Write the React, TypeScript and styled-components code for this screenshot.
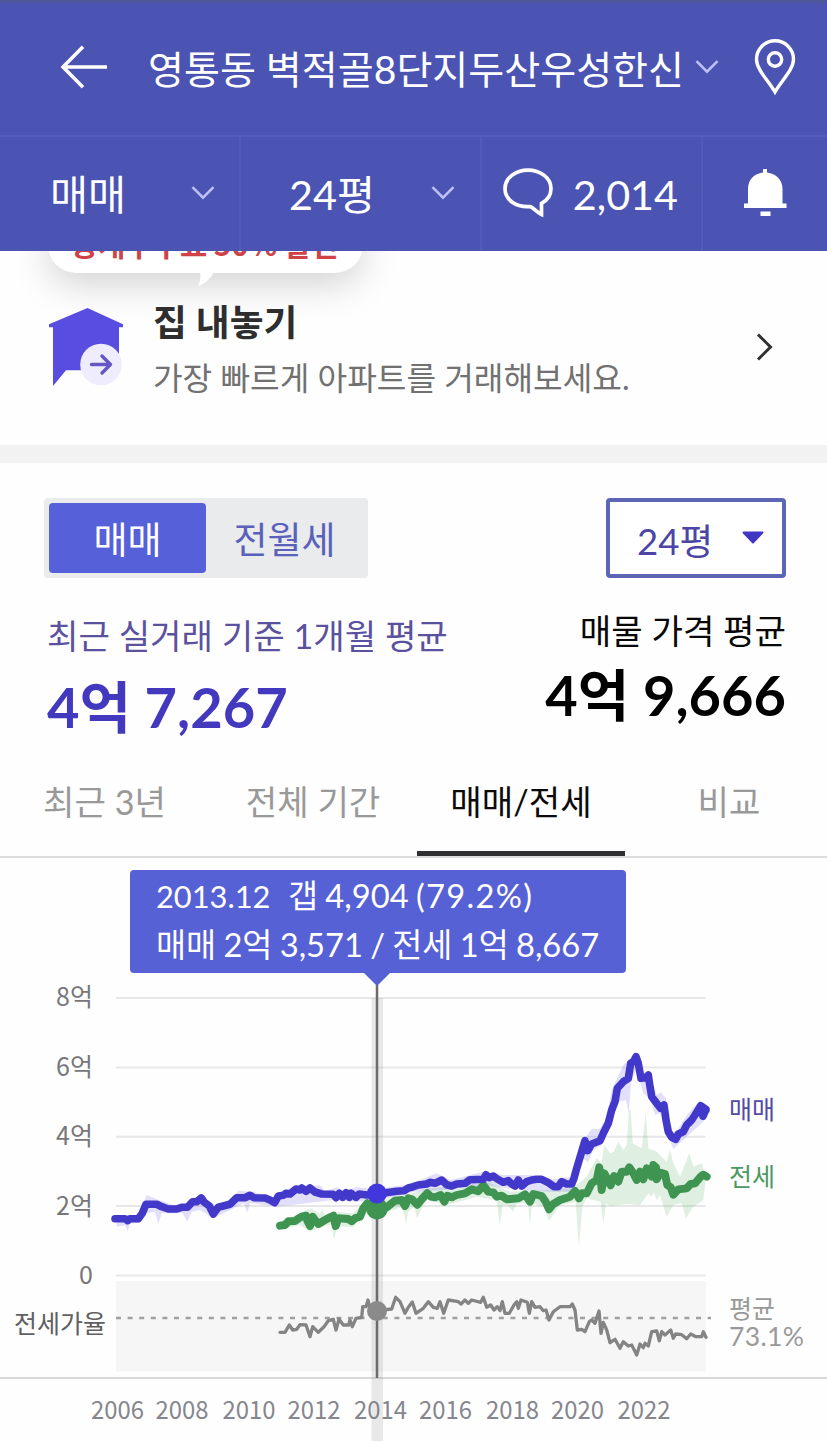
import React from "react";
import styled, { createGlobalStyle } from "styled-components";

const GlobalStyle = createGlobalStyle`
  * { box-sizing: border-box; }
  body {
    margin: 0;
    background: #fefefe;
    font-family: Lato, "Noto Sans CJK KR", sans-serif;
    -webkit-font-smoothing: antialiased;
  }
  button { font: inherit; border: 0; background: none; padding: 0; color: inherit; }
`;

const Page = styled.div`
  width: 827px;
  height: 1441px;
  overflow: hidden;
  display: flex;
  flex-direction: column;
`;

/* ---------- header ---------- */

const Header = styled.header`
  flex: none;
  height: 251px;
  background: #4b54b2;
  border-top: 3px solid #4e5798;
  color: #fff;
`;

const TitleBar = styled.div`
  height: 132px;
  display: flex;
  align-items: center;
  padding: 0 31px 4px 60px;
`;

const Title = styled.h1`
  margin: 3px 0 0 40px;
  font-size: 39.1px;
  font-weight: 400;
  line-height: 56px;
  white-space: nowrap;
  width: 547px;
`;

const PinSlot = styled.span`
  display: flex;
  margin-left: auto;
`;

const FilterBar = styled.nav`
  height: 116px;
  display: grid;
  grid-template-columns: 239px 241px 221px 126px;
  border-top: 2px solid #545dba;
`;

const FilterCell = styled.button<{ $left: number; $right: number }>`
  display: flex;
  align-items: center;
  justify-content: space-between;
  padding: 0 ${(p) => p.$right}px 0 ${(p) => p.$left}px;
  font-size: 41.3px;
  line-height: 56px;
  white-space: nowrap;
  & > svg { margin-top: -3px; }
  & + & { border-left: 2px solid #535bb8; }
`;

/* ---------- sell banner ---------- */

const SellSection = styled.section`
  position: relative;
  flex: none;
  height: 194px;
  overflow: hidden;
  display: flex;
  align-items: flex-start;
  padding: 47px 54px 0 49px;
`;

const PromoBubble = styled.div`
  position: absolute;
  left: 48px;
  top: -40px;
  width: 315px;
  height: 62px;
  border-radius: 28px;
  background: #fff;
  box-shadow: 0 12px 36px rgba(0, 0, 0, 0.17);
  color: #cf4348;
  font-size: 29.6px;
  font-weight: 700;
  line-height: 40px;
  padding: 13px 0 0 23px;
  white-space: nowrap;
  font-family: "Noto Sans CJK KR", sans-serif;
`;

const BubbleTail = styled.svg`
  position: absolute;
  left: 148px;
  top: 61px;
`;

const HouseSlot = styled.span`
  position: relative;
  display: flex;
  margin-top: 9px;
`;

const SellText = styled.div`
  position: relative;
  margin-left: 30px;
  flex: 1;
`;

const SellTitle = styled.h2`
  margin: 0;
  font-size: 36.8px;
  font-weight: 700;
  line-height: 48px;
  color: #2e2e2e;
`;

const SellDescription = styled.p`
  margin: 8px 0 0;
  font-size: 32.2px;
  line-height: 48px;
  color: #717171;
  white-space: nowrap;
`;

const ChevronSlot = styled.span`
  display: flex;
  margin-top: 34px;
`;

const Divider = styled.div`
  flex: none;
  height: 18px;
  background: #f2f2f2;
`;

/* ---------- price summary ---------- */

const Controls = styled.div`
  flex: none;
  display: flex;
  justify-content: space-between;
  padding: 35px 41px 0 44px;
`;

const Segmented = styled.div`
  display: flex;
  width: 324px;
  height: 80px;
  padding: 5px;
  border-radius: 4px;
  background: #e9ebed;
`;

const Segment = styled.button<{ $active?: boolean }>`
  width: 157px;
  border-radius: 4px;
  font-size: 37px;
  line-height: 56px;
  padding-top: 3px;
  color: ${(p) => (p.$active ? "#fff" : "#5a61ba")};
  background: ${(p) => (p.$active ? "#5660d8" : "transparent")};
`;

const SizeSelect = styled.button`
  display: flex;
  align-items: center;
  justify-content: space-between;
  width: 180px;
  height: 80px;
  padding: 6px 18px 0 27px;
  border: 4px solid #5c66b4;
  border-radius: 4px;
  background: #fff;
  color: #4c44a6;
  font-size: 36.6px;
  line-height: 56px;
`;

const CaretSlot = styled.span`
  display: flex;
  margin-top: -8px;
`;

const Prices = styled.div`
  flex: none;
  display: flex;
  justify-content: space-between;
  padding: 28px 41px 0 47px;
  height: 197px;
`;

const Price = styled.div<{ $tone: "recent" | "listing" }>`
  display: flex;
  flex-direction: column;
  padding-top: ${(p) => (p.$tone === "recent" ? 5 : 0)}px;
  align-items: ${(p) => (p.$tone === "recent" ? "flex-start" : "flex-end")};
  gap: ${(p) => (p.$tone === "recent" ? 10 : 3)}px;
  white-space: nowrap;
  span {
    font-size: 34.2px;
    line-height: 50px;
    color: ${(p) => (p.$tone === "recent" ? "#5a519f" : "#080808")};
  }
  strong {
    font-size: 56px;
    font-weight: 700;
    line-height: 72px;
    color: ${(p) => (p.$tone === "recent" ? "#4339bf" : "#000")};
  }
`;

/* ---------- tabs ---------- */

const Tabs = styled.div`
  flex: none;
  display: grid;
  grid-template-columns: 209px 208px 208px 202px;
  height: 83px;
  border-bottom: 2px solid #dcdcdc;
`;

const Tab = styled.button<{ $active?: boolean; $pad?: number }>`
  font-size: 34.2px;
  line-height: 54px;
  padding-bottom: 22px;
  padding-left: ${(p) => p.$pad ?? 0}px;
  white-space: nowrap;
  color: ${(p) => (p.$active ? "#0b0b0b" : "#999")};
  border-bottom: 5px solid ${(p) => (p.$active ? "#303033" : "transparent")};
`;

/* ---------- chart ---------- */

const ChartArea = styled.section`
  position: relative;
  flex: none;
  height: 583px;
`;

const ChartSvg = styled.svg`
  display: block;
  font-family: "Noto Sans CJK KR", sans-serif;
`;

const Tooltip = styled.div`
  position: absolute;
  left: 130px;
  top: 12px;
  width: 496px;
  height: 103px;
  padding: 2px 0 0 26px;
  border-radius: 4px;
  background: #5761d6;
  color: #fff;
  font-size: 32.7px;
  line-height: 48px;
  white-space: nowrap;
  word-spacing: -1.1px;
  &::after {
    content: "";
    position: absolute;
    left: 233px;
    top: 102px;
    border: 14px solid transparent;
    border-top-color: #5761d6;
    border-bottom: 0;
  }
`;

const TooltipDate = styled.span`
  display: inline-block;
  width: 132px;
  font-size: 30.8px;
`;

const TooltipShare = styled.span`
  letter-spacing: 1.3px;
`;

/* Series samples: x runs on from one block to the next, both axes in thirds of a pixel. */
type Sample = [number, number];

const place = (samples: Sample[], dx: number, dy: number): Sample[] =>
  samples.map(([x, y]) => [dx + x / 3, dy + y / 3]);

const toPoints = (samples: Sample[]) =>
  samples.map(([x, y]) => `${x.toFixed(1)},${y.toFixed(1)}`).join(" ");

const sale = toPoints([
  ...place([[345,206],[375,206],[383,212],[390,206],[415,206],[427,190],[438,163],[470,163],[485,170],[505,177],[530,177],[545,172],[562,172],[578,155],[590,155],[604,144],[612,156],[628,168],[640,192],[655,172],[690,163],[710,143],[735,143],[750,136],[762,143],[795,144],[810,150],[824,158],[835,138],[850,136],[857,130],[870,132],[888,117],[900,120],[905,114],[918,124],[930,114],[945,126],[965,132],[1000,133],[1008,143],[1018,130],[1028,142],[1038,128],[1048,142],[1054,130],[1068,142],[1078,132],[1100,135],[1130,132],[1190,124],[1212,122],[1225,114]], 0, 1150),
  ...place([[10,470],[25,465],[50,462],[60,457],[75,460],[95,450],[110,464],[125,468],[140,462],[165,460],[180,449],[220,448],[228,434],[238,443],[250,438],[262,447],[280,457],[295,452],[305,462],[315,468],[325,450],[335,468],[350,455],[365,450],[380,448],[395,448],[415,458],[432,470],[445,470],[455,455],[470,462],[485,462],[492,445],[500,415],[515,365],[525,332],[533,362],[545,342],[570,332],[580,310],[595,280],[605,240],[615,215],[622,175],[640,155],[655,145],[662,100],[670,95],[678,80],[685,100],[693,145],[708,143],[715,135],[720,170],[725,200],[740,220],[752,235],[762,225],[768,270],[775,305],[785,322],[797,328],[805,312],[820,305],[830,285],[845,270],[855,255],[872,227],[888,238],[879,259],[876,240],[888,240]], 410, 1030),
]);

const lease = toPoints([
  ...place([[840,227],[855,225],[865,214],[885,213],[895,206],[905,200],[918,197],[922,212],[930,228],[938,200],[948,214],[955,222],[975,210],[990,202],[1000,197],[1007,228],[1015,205],[1045,207],[1055,214],[1065,205],[1080,200],[1090,175],[1102,160],[1115,172],[1130,172],[1160,172],[1185,152],[1205,150],[1215,168],[1225,145]], 0, 1150),
  ...place([[6,508],[22,524],[35,508],[52,490],[63,500],[75,502],[92,495],[103,515],[112,497],[125,502],[140,495],[165,490],[185,478],[205,484],[220,466],[235,485],[250,487],[260,500],[275,497],[290,508],[325,505],[345,493],[360,515],[370,492],[395,498],[407,515],[417,538],[430,522],[450,510],[480,500],[495,483],[507,505],[515,490],[530,490],[545,460],[560,450],[568,412],[575,480],[583,430],[602,466],[612,438],[625,455],[635,425],[650,425],[658,412],[670,430],[680,450],[690,425],[700,448],[710,415],[725,440],[730,405],[738,412],[740,448],[752,428],[765,432],[772,465],[782,472],[790,494],[805,478],[830,475],[842,462],[855,460],[872,440],[880,434],[890,440]], 410, 1030),
]);

const ratio = toPoints([
  ...place([[840,547],[855,547],[868,525],[878,540],[890,538],[900,524],[918,525],[930,560],[938,530],[955,547],[972,530],[985,512],[1000,508],[1008,540],[1017,508],[1030,525],[1046,525],[1050,510],[1057,530],[1068,505],[1085,502],[1088,470],[1098,470],[1104,450],[1110,475],[1130,482],[1175,477],[1187,442],[1200,455],[1215,490],[1225,472]], 0, 1150),
  ...place([[7,156],[18,190],[40,175],[55,155],[70,172],[82,175],[90,155],[101,190],[115,150],[145,155],[153,162],[165,150],[175,160],[185,150],[212,157],[220,142],[230,172],[242,165],[252,180],[262,170],[270,182],[277,155],[285,190],[298,190],[312,165],[320,155],[325,175],[333,150],[352,157],[358,190],[365,155],[375,172],[390,170],[400,182],[408,180],[417,210],[430,185],[450,170],[480,170],[487,162],[495,180],[502,240],[515,238],[525,245],[538,215],[545,210],[555,220],[567,183],[573,250],[580,217],[590,240],[600,278],[615,268],[630,295],[640,275],[655,288],[665,285],[680,315],[690,282],[700,293],[705,280],[715,288],[725,245],[740,243],[748,272],[755,245],[765,255],[782,240],[790,265],[797,252],[815,254],[830,266],[842,252],[858,260],[875,260],[880,245],[888,262]], 410, 1250),
]);

const saleBand = toPoints([
  ...place([[350,205],[415,200],[440,135],[470,148],[520,165],[565,160],[600,137],[645,165],[690,155],[715,122],[760,125],[825,145],[860,118],[900,105],[940,108],[960,105],[975,122],[1012,112],[1030,125],[1070,112],[1130,118],[1190,108],[1225,105]], 0, 1150),
  ...place([[30,450],[80,430],[120,450],[220,425],[280,435],[370,435],[430,448],[485,440],[510,370],[525,325],[545,297],[570,297],[590,260],[605,180],[640,105],[675,75],[695,125],[720,135],[740,195],[752,187],[768,205],[775,250],[785,310],[800,305],[830,255],[870,212],[890,230],[880,275],[830,320],[790,357],[765,290],[750,250],[735,255],[720,205],[700,190],[678,120],[663,160],[656,250],[648,210],[625,215],[600,290],[575,345],[550,360],[535,395],[515,385],[490,485],[430,485],[330,480],[220,465],[100,480],[10,485]], 410, 1030),
  ...place([[1190,140],[1070,155],[1000,150],[830,170],[760,160],[750,160],[742,188],[732,160],[640,205],[600,180],[575,185],[562,215],[548,190],[485,190],[475,222],[465,185],[440,190],[420,220],[390,220],[383,243],[375,225],[350,230]], 0, 1150),
]);

const leaseBand = toPoints([
  ...place([[840,215],[900,190],[930,175],[960,190],[967,178],[975,195],[1000,185],[1060,190],[1090,160],[1180,145],[1225,132]], 0, 1150),
  ...place([[60,475],[180,465],[220,450],[300,485],[400,480],[480,475],[500,465],[530,440],[560,385],[575,400],[583,345],[600,370],[612,365],[625,335],[640,360],[650,345],[657,240],[662,240],[668,340],[695,355],[707,250],[715,355],[740,365],[770,395],[780,360],[790,400],[810,440],[838,370],[850,410],[875,400],[888,440],[880,510],[850,530],[828,565],[815,520],[790,525],[770,560],[750,495],[740,510],[732,488],[722,500],[715,490],[690,525],[650,522],[600,528],[588,520],[580,580],[572,515],[530,505],[517,530],[507,650],[497,515],[450,525],[417,572],[400,530],[366,520],[360,585],[354,520],[320,520],[310,545],[295,528],[285,525],[278,525],[269,585],[260,510],[200,500],[110,525],[50,510],[35,535],[22,565],[12,530]], 410, 1030),
  ...place([[1225,185],[1218,222],[1208,170],[1180,180],[1090,195],[1060,230],[1012,230],[1002,268],[994,225],[970,228],[930,245],[900,225],[840,238]], 0, 1150),
]);

const yLabels = [
  { text: "8억", y: 1006 },
  { text: "6억", y: 1075.5 },
  { text: "4억", y: 1145 },
  { text: "2억", y: 1214.5 },
  { text: "0", y: 1283.5 },
];
const gridLines = [998, 1067.5, 1136.8, 1206, 1275.5];
const years = [
  [2006, 91], [2008, 155.5], [2010, 222.5], [2012, 287.5], [2014, 354],
  [2016, 419], [2018, 486], [2020, 551], [2022, 617.5],
];

const ChevronDown = () => (
  <svg width="24" height="14" viewBox="0 0 24 14" fill="none">
    <path d="M1.5 1.2 12 11.7 22.500 1.200" stroke="#bfc1ff" strokeWidth="2.500" />
  </svg>
);

const PriceChart = () => (
  <ChartSvg width="827" height="583" viewBox="0 858 827 583">
    <rect x="116" y="1281" width="590" height="90.500" fill="#f6f6f6" />
    {gridLines.map((y) => (
      <line key={y} x1="116" x2="705.500" y1={y} y2={y} stroke="#e7e7e7" strokeWidth="2" />
    ))}
    <line x1="0" x2="827" y1="1378" y2="1378" stroke="#d9d9d9" strokeWidth="2" />
    {years.map(([year, x]) => (
      <text key={year} x={x} y="1419" fontSize="25" fill="#86868e" textLength="53" lengthAdjust="spacingAndGlyphs">{year}</text>
    ))}
    <rect x="371.500" y="998" width="11.500" height="443" fill="#777" fillOpacity=".16" />
    <line x1="116" x2="711" y1="1318" y2="1318" stroke="#a0a0a0" strokeWidth="2.300" strokeDasharray="5 6.600" />
    <polygon points={leaseBand} fill="#45a455" fillOpacity=".17" />
    <polygon points={saleBand} fill="#6a5af0" fillOpacity=".19" />
    <line x1="377" x2="377" y1="985" y2="1378" stroke="#6b6b6b" strokeWidth="2.500" />
    <g fill="none" strokeLinecap="round" strokeLinejoin="round">
      <polyline points={lease} stroke="#3f9452" strokeWidth="7.900" />
      <circle cx="377" cy="1208.500" r="10.800" fill="#3f9452" />
      <polyline points={sale} stroke="#4239ca" strokeWidth="7.600" />
      <circle cx="377" cy="1193.500" r="10" fill="#4137dc" />
      <polyline points={ratio} stroke="#848484" strokeWidth="3.300" />
      <circle cx="377" cy="1311" r="10" fill="#8a8a8a" />
    </g>
    {yLabels.map(({ text, y }) => (
      <text key={text} x="93" y={y} fontSize="25" fill="#77777b" textAnchor="end">{text}</text>
    ))}
    <text x="14" y="1333" fontSize="25" fill="#606060" textLength="92">전세가율</text>
    <text x="729" y="1119" fontSize="25" fill="#544aa6" textLength="46">매매</text>
    <text x="729" y="1186" fontSize="25" fill="#4a9960" textLength="46">전세</text>
    <text x="729" y="1317.500" fontSize="25" fill="#999" textLength="46">평균</text>
    <text x="729" y="1346" fontSize="26.500" fill="#999" textLength="75" fontFamily="Lato">73.1%</text>
  </ChartSvg>
);

export default function App() {
  return (
    <Page>
      <GlobalStyle />
      <Header>
        <TitleBar>
          <svg width="48" height="44" viewBox="0 0 48 44" fill="none" stroke="#fff" strokeWidth="3.500">
            <path d="M23 1.800 3 22l20 20.200M3 22h44" />
          </svg>
          <Title>영통동 벽적골8단지두산우성한신</Title>
          <ChevronDown />
          <PinSlot>
            <svg width="42" height="56" viewBox="0 0 42 56" fill="none" stroke="#fff" strokeWidth="3.400">
              <path d="M21 53C14 41 2.500 30.500 2.500 20.300a18.500 18.500 0 0 1 37 0C39.500 30.500 28 41 21 53Z" />
              <circle cx="21" cy="20.500" r="6.700" />
            </svg>
          </PinSlot>
        </TitleBar>
        <FilterBar>
          <FilterCell $left={50} $right={24}>매매<ChevronDown /></FilterCell>
          <FilterCell $left={48} $right={25}>24평<ChevronDown /></FilterCell>
          <FilterCell $left={21} $right={23}>
            <svg width="50" height="50" viewBox="0 0 50 50" fill="none" stroke="#fff" strokeWidth="3.700" strokeLinejoin="miter">
              <path d="M38.500 46.500V35.300C45 32 48 27 48 20.500 48 10 37.500 2.200 25 2.200S2 10 2 20.500C2 32 13 39.500 27 38.500C31 40 33 44 38.500 46.500Z" />
            </svg>
            2,014
          </FilterCell>
          <FilterCell $left={40} $right={40}>
            <svg width="44" height="50" viewBox="0 0 44 50" fill="#fff">
              <path d="M20 1h4v3.500C33 5.500 39.500 12 39.500 21v14.500H43.500V40H1v-4.500h4V21C5 12 11 5.500 20 4.500ZM17.500 43.500h10V48H17.500Z" />
            </svg>
          </FilterCell>
        </FilterBar>
      </Header>

      <SellSection>
        <PromoBubble>
          중개수수료 50% 할인
          <BubbleTail width="20" height="16" viewBox="0 0 20 16">
            <path d="M4 0h14C15 6 9 12 2 14 4 10 5 5 4 0Z" fill="#fff" />
          </BubbleTail>
        </PromoBubble>
        <HouseSlot>
          <svg width="74" height="80" viewBox="0 0 74 80">
            <path d="M38.500 1 74 17.200v3h-4v43H17L4 79V20.200H0v-3Z" fill="#584de0" />
            <circle cx="52" cy="57.500" r="20.800" fill="#eeecfd" />
            <path d="M42.500 57.500H60M53 49l8.500 8.500L53 66" fill="none" stroke="#6558c4" strokeWidth="3.400" strokeLinecap="round" strokeLinejoin="round" />
          </svg>
        </HouseSlot>
        <SellText>
          <SellTitle>집 내놓기</SellTitle>
          <SellDescription>가장 빠르게 아파트를 거래해보세요.</SellDescription>
        </SellText>
        <ChevronSlot>
          <svg width="17" height="30" viewBox="0 0 17 30" fill="none">
            <path d="m2 2.500 12.500 12.500L2 27.500" stroke="#303030" strokeWidth="3" />
          </svg>
        </ChevronSlot>
      </SellSection>
      <Divider />

      <Controls>
        <Segmented>
          <Segment $active>매매</Segment>
          <Segment>전월세</Segment>
        </Segmented>
        <SizeSelect>
          24평
          <CaretSlot>
            <svg width="22" height="13" viewBox="0 0 22 13">
              <path d="M1.500 1.500h19L11 11.500Z" fill="#4237c5" stroke="#4237c5" strokeWidth="2" strokeLinejoin="round" />
            </svg>
          </CaretSlot>
        </SizeSelect>
      </Controls>
      <Prices>
        <Price $tone="recent">
          <span>최근 실거래 기준 1개월 평균</span>
          <strong>4억 7,267</strong>
        </Price>
        <Price $tone="listing">
          <span>매물 가격 평균</span>
          <strong>4억 9,666</strong>
        </Price>
      </Prices>

      <Tabs>
        <Tab>최근 3년</Tab>
        <Tab>전체 기간</Tab>
        <Tab $active>매매/전세</Tab>
        <Tab $pad={6}>비교</Tab>
      </Tabs>

      <ChartArea>
        <PriceChart />
        <Tooltip>
          <div><TooltipDate>2013.12</TooltipDate>갭 4,904 <TooltipShare>(79.2%)</TooltipShare></div>
          <div>매매 2억 3,571 / 전세 1억 8,667</div>
        </Tooltip>
      </ChartArea>
    </Page>
  );
}
